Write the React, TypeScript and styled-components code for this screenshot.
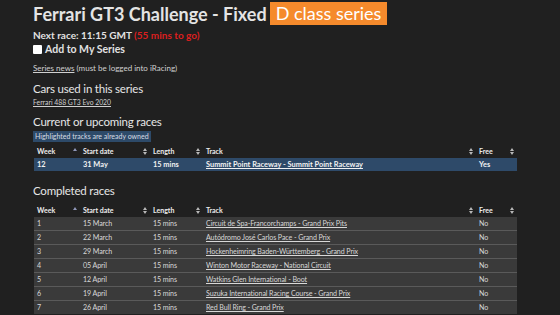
import React from "react";
import styled, { createGlobalStyle } from "styled-components";

const GlobalStyle = createGlobalStyle`
  html, body {
    margin: 0;
    padding: 0;
    background: #202020;
    color: #e2e2e2;
    font-family: Lato, "Noto Sans", sans-serif;
    overflow: hidden;
  }
`;

const Page = styled.div`
  padding: 2px 0 0 33px;
  width: 484px;
`;

const TitleRow = styled.h1`
  display: flex;
  align-items: center;
  gap: 3px;
  margin: 0;
  height: 23px;
  font-size: 18px;
  font-weight: 700;
  color: #e4e4e4;
  white-space: nowrap;
`;

const ClassBadge = styled.span`
  background: #f58a2c;
  color: #fff;
  font-weight: 400;
  height: 23px;
  line-height: 23px;
  padding: 0 6px;
`;

const NextRace = styled.div`
  margin-top: 3px;
  font-size: 10px;
  font-weight: 700;
  line-height: 14px;
`;

const Countdown = styled.span`
  color: #dc1f1f;
`;

const CheckRow = styled.label`
  display: flex;
  align-items: center;
  gap: 3px;
  font-size: 10.5px;
  font-weight: 700;
  line-height: 14px;
`;

const Check = styled.input`
  appearance: none;
  margin: 0;
  width: 9px;
  height: 9px;
  background: #fff;
  border-radius: 1px;
`;

const Small = styled.div<{ gap: number; size: number }>`
  margin-top: ${({ gap }) => gap}px;
  font-size: ${({ size }) => size}px;
  line-height: 11px;
  color: #d0d0d0;
`;

const Link = styled.a<{ bold?: boolean }>`
  color: inherit;
  text-decoration: underline;
  font-weight: ${({ bold }) => (bold ? 700 : 400)};
`;

const Heading = styled.h2<{ gap: number }>`
  margin: ${({ gap }) => gap}px 0 0;
  font-size: 11.5px;
  letter-spacing: -0.2px;
  font-weight: 400;
  line-height: 17px;
  color: #e6e6e6;
`;

const Notice = styled.div`
  width: fit-content;
  margin-top: 1px;
  background: #2d4a69;
  color: #d8dde4;
  font-size: 7px;
  line-height: 11px;
  padding: 0 2px;
`;

const Table = styled.table<{ gap: number }>`
  width: 483px;
  margin: ${({ gap }) => gap}px 0 0 1px;
  border-collapse: collapse;
  table-layout: fixed;
  font-size: 7px;
`;

const Th = styled.th<{ w: number }>`
  box-sizing: border-box;
  width: ${({ w }) => w}px;
  height: 14px;
  padding: 0 0 0 3px;
  text-align: left;
  font-weight: 700;
  color: #ececec;
  position: relative;
`;

const SortIcon = styled.svg`
  position: absolute;
  right: 3px;
  top: 4px;
`;

const Tr = styled.tr<{ current?: boolean }>`
  background: ${({ current }) => (current ? "#2e4a69" : "#3a3a3a")};
  color: ${({ current }) => (current ? "#f2f2f2" : "#d8d8d8")};
  font-weight: ${({ current }) => (current ? 700 : 400)};
  font-size: ${({ current }) => (current ? 7.4 : 7.1)}px;
  letter-spacing: ${({ current }) => (current ? 0 : -0.1)}px;
  border-top: ${({ current }) => (current ? "none" : "1.5px solid #5a5a5a")};
  &:first-child {
    border-top: none;
  }
`;

const Td = styled.td`
  height: 13px;
  padding: 0 0 0 3px;
  white-space: nowrap;
  overflow: hidden;
`;

const Sort = ({ dir }: { dir?: "asc" }) =>
  dir === "asc" ? (
    <SortIcon width="4" height="6" viewBox="0 0 4 6">
      <path d="M0 3 L2 0 L4 3 Z" fill="#8f96b8" />
    </SortIcon>
  ) : (
    <SortIcon width="4" height="7" viewBox="0 0 4 7">
      <path d="M0 3 L2 0 L4 3 Z M0 4 L2 7 L4 4 Z" fill="#b8b8b8" />
    </SortIcon>
  );

const Header = () => (
  <thead>
    <tr>
      <Th w={46}>
        Week
        <Sort dir="asc" />
      </Th>
      <Th w={70}>
        Start date
        <Sort />
      </Th>
      <Th w={53}>
        Length
        <Sort />
      </Th>
      <Th w={273}>
        Track
        <Sort />
      </Th>
      <Th w={41}>
        Free
        <Sort />
      </Th>
    </tr>
  </thead>
);

const completed = [
  ["1", "15 March", "Circuit de Spa-Francorchamps - Grand Prix Pits"],
  ["2", "22 March", "Autódromo José Carlos Pace - Grand Prix"],
  ["3", "29 March", "Hockenheimring Baden-Württemberg - Grand Prix"],
  ["4", "05 April", "Winton Motor Raceway - National Circuit"],
  ["5", "12 April", "Watkins Glen International - Boot"],
  ["6", "19 April", "Suzuka International Racing Course - Grand Prix"],
  ["7", "26 April", "Red Bull Ring - Grand Prix"],
];

export default function App() {
  return (
    <Page>
      <GlobalStyle />
      <TitleRow>
        Ferrari GT3 Challenge - Fixed <ClassBadge>D class series</ClassBadge>
      </TitleRow>
      <NextRace>
        Next race: 11:15 GMT <Countdown>(55 mins to go)</Countdown>
      </NextRace>
      <CheckRow>
        <Check type="checkbox" />
        Add to My Series
      </CheckRow>
      <Small gap={7} size={8}>
        <Link href="#">Series news</Link> (must be logged into iRacing)
      </Small>
      <Heading gap={6}>Cars used in this series</Heading>
      <Small gap={0} size={6.8}>
        <Link href="#">Ferrari 488 GT3 Evo 2020</Link>
      </Small>
      <Heading gap={5}>Current or upcoming races</Heading>
      <Notice>Highlighted tracks are already owned</Notice>
      <Table gap={2}>
        <Header />
        <tbody>
          <Tr current>
            <Td>12</Td>
            <Td>31 May</Td>
            <Td>15 mins</Td>
            <Td>
              <Link href="#" bold>
                Summit Point Raceway - Summit Point Raceway
              </Link>
            </Td>
            <Td>Yes</Td>
          </Tr>
        </tbody>
      </Table>
      <Heading gap={11}>Completed races</Heading>
      <Table gap={4}>
        <Header />
        <tbody>
          {completed.map(([week, date, track]) => (
            <Tr key={week}>
              <Td>{week}</Td>
              <Td>{date}</Td>
              <Td>15 mins</Td>
              <Td>
                <Link href="#">{track}</Link>
              </Td>
              <Td>No</Td>
            </Tr>
          ))}
        </tbody>
      </Table>
    </Page>
  );
}
